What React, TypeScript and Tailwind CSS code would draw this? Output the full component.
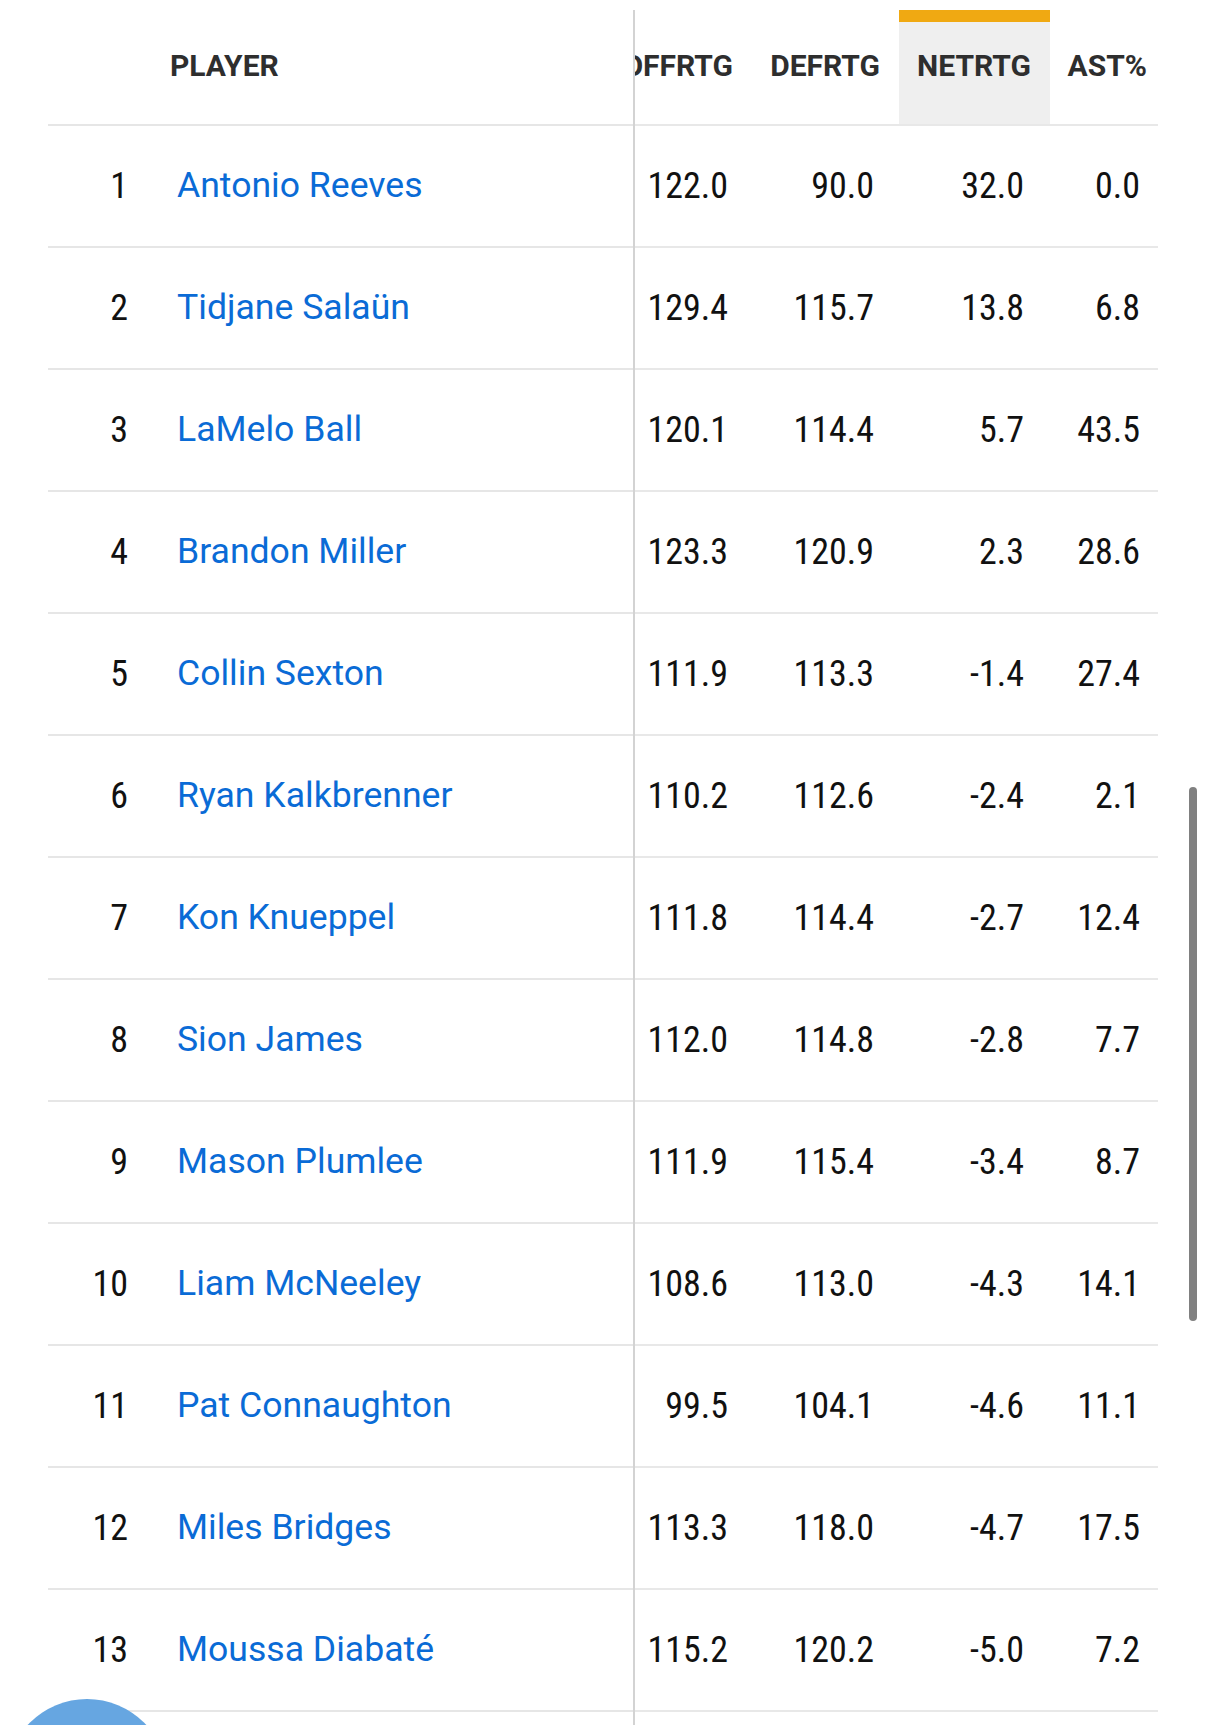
import React from "react";

interface PlayerRow {
  rank: number;
  name: string;
  off: string;
  def: string;
  net: string;
  ast: string;
}

const rows: PlayerRow[] = [
  { rank: 1, name: "Antonio Reeves", off: "122.0", def: "90.0", net: "32.0", ast: "0.0" },
  { rank: 2, name: "Tidjane Salaün", off: "129.4", def: "115.7", net: "13.8", ast: "6.8" },
  { rank: 3, name: "LaMelo Ball", off: "120.1", def: "114.4", net: "5.7", ast: "43.5" },
  { rank: 4, name: "Brandon Miller", off: "123.3", def: "120.9", net: "2.3", ast: "28.6" },
  { rank: 5, name: "Collin Sexton", off: "111.9", def: "113.3", net: "-1.4", ast: "27.4" },
  { rank: 6, name: "Ryan Kalkbrenner", off: "110.2", def: "112.6", net: "-2.4", ast: "2.1" },
  { rank: 7, name: "Kon Knueppel", off: "111.8", def: "114.4", net: "-2.7", ast: "12.4" },
  { rank: 8, name: "Sion James", off: "112.0", def: "114.8", net: "-2.8", ast: "7.7" },
  { rank: 9, name: "Mason Plumlee", off: "111.9", def: "115.4", net: "-3.4", ast: "8.7" },
  { rank: 10, name: "Liam McNeeley", off: "108.6", def: "113.0", net: "-4.3", ast: "14.1" },
  { rank: 11, name: "Pat Connaughton", off: "99.5", def: "104.1", net: "-4.6", ast: "11.1" },
  { rank: 12, name: "Miles Bridges", off: "113.3", def: "118.0", net: "-4.7", ast: "17.5" },
  { rank: 13, name: "Moussa Diabaté", off: "115.2", def: "120.2", net: "-5.0", ast: "7.2" },
];

function Line({ thick }: { thick?: boolean }) {
  return <div className={thick ? "h-[2px] bg-[#e8e8e8]" : "h-[2px] bg-[#e6e6e6]"} />;
}

export default function App() {
  return (
    <div className="relative h-[1725px] w-[1206px] overflow-hidden bg-white font-['Roboto',sans-serif]">
      <div className="flex pl-[48px] pt-[10px]">
        {/* sticky player column */}
        <div className="w-[585px] shrink-0">
          <div className="flex h-[114px] items-center pb-[3px] pl-[122px] text-[30px] font-bold text-[#2e2e2e]">
            PLAYER
          </div>
          <Line />
          {rows.map((r) => (
            <div key={r.rank}>
              <div className="flex h-[120px] items-center">
                <span className="w-[80px] text-right text-[36px] text-[#111] font-stretch-semi-condensed">
                  {r.rank}
                </span>
                <span className="ml-[49px] text-[35.6px] text-[#0a6bd6]">{r.name}</span>
              </div>
              <Line />
            </div>
          ))}
          <div className="h-[120px]" />
        </div>

        <div className="w-[2px] shrink-0 bg-[#d3d3d3]" />

        {/* scrollable stats */}
        <div className="w-[523px] shrink-0 overflow-hidden">
          <div className="flex h-[114px] text-[30px] font-bold text-[#2e2e2e]">
            <div className="flex w-[113px] shrink-0 items-center justify-end pb-[3px] pr-[15px]">OFFRTG</div>
            <div className="flex w-[151px] shrink-0 items-center justify-end pb-[3px] pr-[19px]">DEFRTG</div>
            <div className="flex w-[151px] shrink-0 flex-col">
              <div className="h-[12px] bg-[#f0a912]" />
              <div className="flex flex-1 items-center justify-end bg-[#efefef] pb-[15px] pr-[19px]">NETRTG</div>
            </div>
            <div className="flex w-[108px] shrink-0 items-center justify-end pb-[3px] pr-[11px]">AST%</div>
          </div>
          <Line thick />
          {rows.map((r) => (
            <div key={r.rank}>
              <div className="flex h-[120px] items-center text-[36px] text-[#111] font-stretch-semi-condensed">
                <span className="w-[113px] shrink-0 pr-[20px] text-right">{r.off}</span>
                <span className="w-[151px] shrink-0 pr-[25px] text-right">{r.def}</span>
                <span className="w-[151px] shrink-0 pr-[26px] text-right">{r.net}</span>
                <span className="w-[108px] shrink-0 pr-[18px] text-right">{r.ast}</span>
              </div>
              <Line thick />
            </div>
          ))}
          <div className="h-[120px]" />
        </div>
      </div>

      {/* scrollbar thumb */}
      <div className="absolute left-[1189px] top-[787px] h-[534px] w-[8px] rounded-full bg-[#808080]" />

      {/* floating action button, mostly off screen */}
      <div className="absolute left-[6px] top-[1699px] h-[162px] w-[162px] rounded-full bg-[#66a6e1]" />
    </div>
  );
}
